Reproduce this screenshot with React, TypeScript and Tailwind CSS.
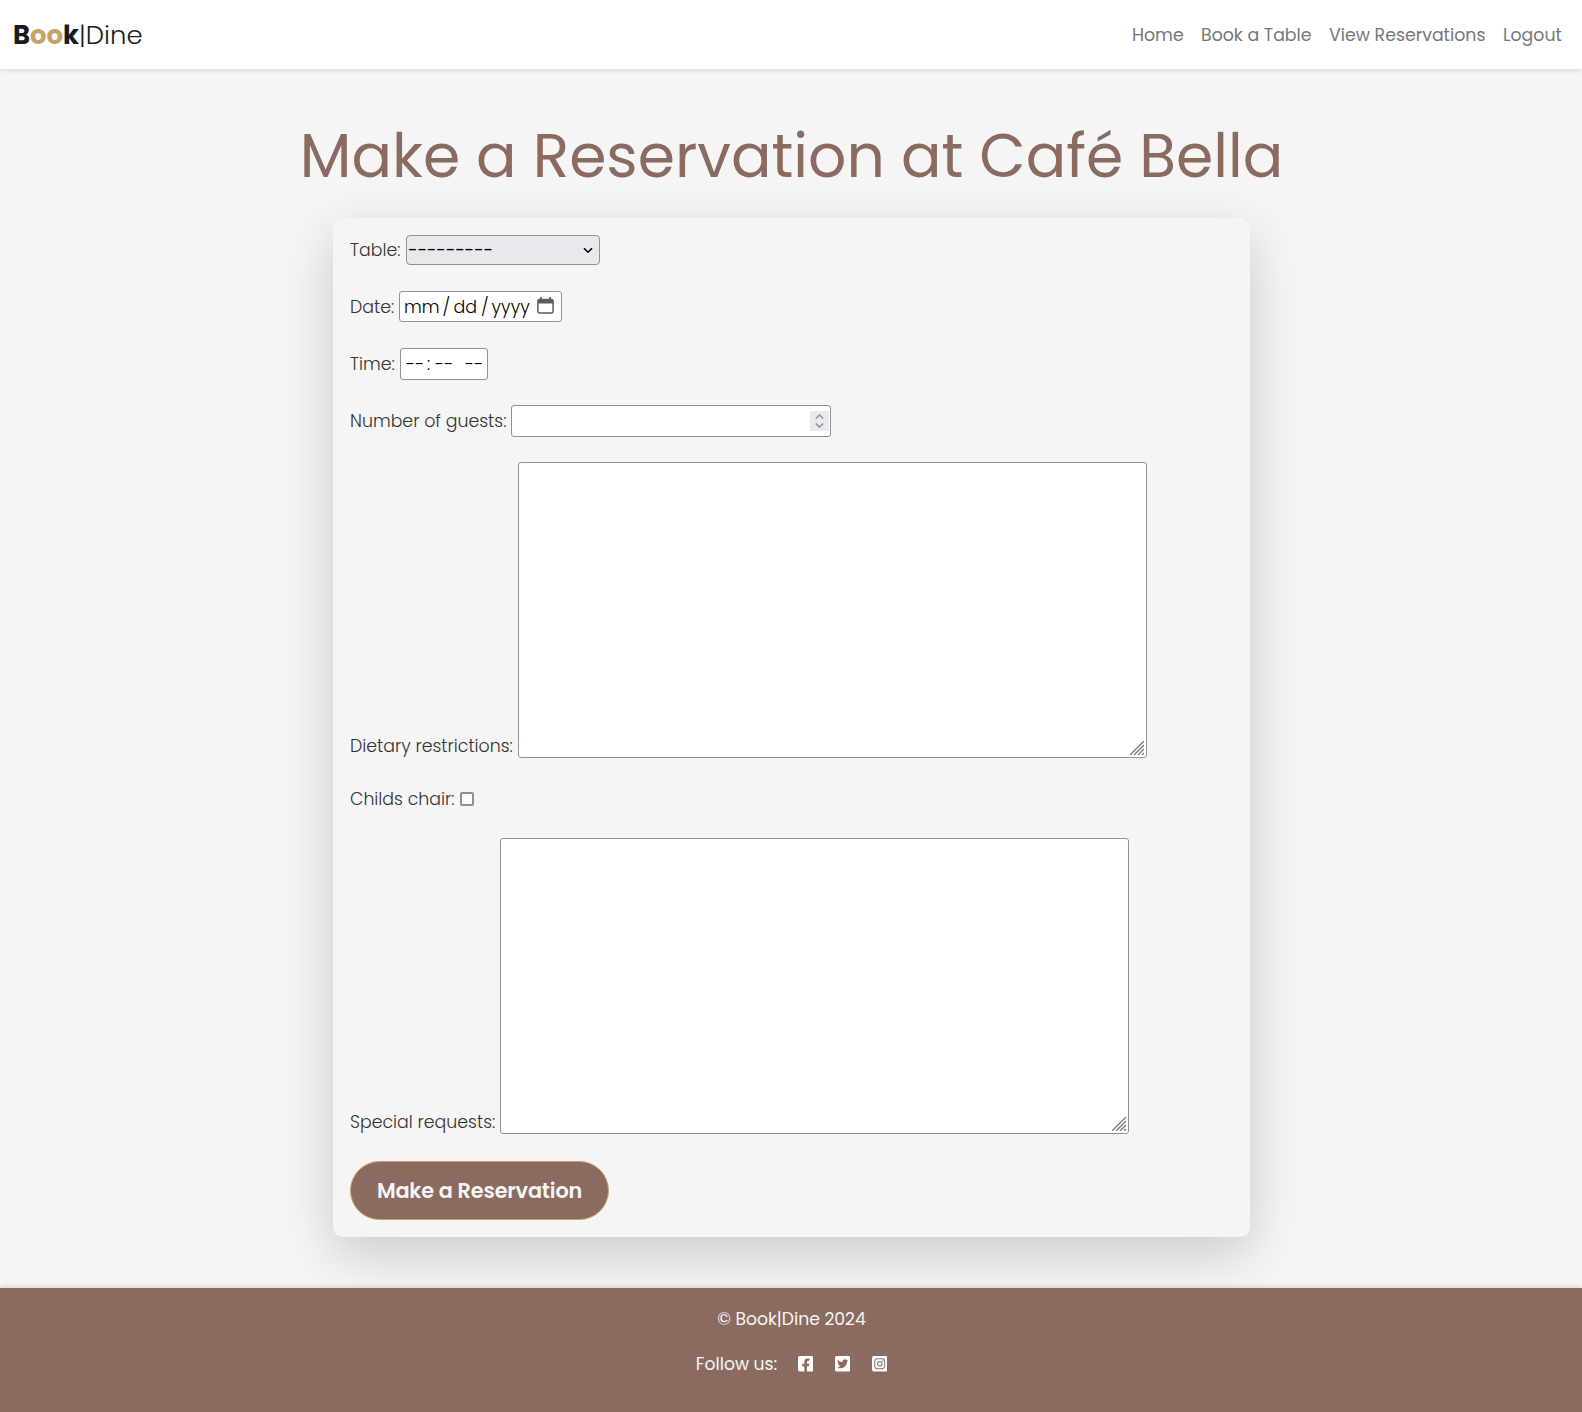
import type { ReactNode } from "react";
import { FaFacebookSquare, FaInstagramSquare, FaTwitterSquare } from "react-icons/fa";

const label = "block h-6 shrink-0 whitespace-nowrap text-[17.38px] leading-6 text-[#333]";
const field = "rounded-[3px] border border-[#8f8f9d] bg-white text-black";

function Row({ children, className = "" }: { children: ReactNode; className?: string }) {
  return <div className={`flex items-center ${className}`}>{children}</div>;
}

function TextArea() {
  return (
    <div className={`${field} flex h-[296px] w-[629px] items-end justify-end p-[2px]`}>
      <svg width="14" height="14" viewBox="0 0 14 14" fill="none" stroke="#777" strokeWidth="1.3">
        <path d="M0 14L14 0M4 14L14 4M8 14L14 8M12 14L14 12" />
      </svg>
    </div>
  );
}

export default function App() {
  return (
    <div className="flex min-h-[1412px] w-full flex-col bg-[#f5f5f5] font-['Poppins','Inter',sans-serif] font-light">
      <nav className="flex h-[69px] items-center justify-between bg-white pr-[19px] pl-[13px] shadow-[0_2px_4px_rgba(0,0,0,0.1)]">
        <div className="flex h-8 items-center text-[25.9px] leading-8 text-[#1a1a1a]">
          <span className="font-bold">
            B<span className="text-[#c9a366]">oo</span>k
          </span>
          <span>|Dine</span>
        </div>
        <div className="flex pt-px text-[17.35px] leading-6 font-normal whitespace-nowrap text-[#777]">
          <a className="w-[69px]">Home</a>
          <a className="w-[128px]">Book a Table</a>
          <a className="w-[174px]">View Reservations</a>
          <a className="w-[60px]">Logout</a>
        </div>
      </nav>

      <h1 className="relative z-20 mt-[51px] h-[72px] pl-px text-center text-[60px] leading-[72px] font-normal whitespace-nowrap text-[#8b6b5f]">
        Make a Reservation at Café Bella
      </h1>

      <form className="relative z-10 mt-[26px] ml-[333px] h-[1019px] w-[917px] rounded-[10px] bg-[#f5f5f5] pt-[17px] pl-[17px] shadow-[0_17px_52px_rgba(0,0,0,0.175)]">
        <Row className="h-[30px]">
          <span className={`${label} w-[56px]`}>Table:</span>
          <div className="flex h-[30px] w-[194px] items-center justify-between rounded-[4px] border border-[#8f8f9d] bg-[#e9e9ed] pr-[6px] pl-px text-[17.4px] text-black">
            <span className="pt-px font-normal tracking-[-0.15px]">---------</span>
            <svg width="10" height="7" viewBox="0 0 10 7" fill="none" stroke="#000" strokeWidth="1.6">
              <path d="M1 1.2L5 5.2L9 1.2" />
            </svg>
          </div>
        </Row>
        <Row className="mt-[26px] h-[31px]">
          <span className={`${label} w-[49px]`}>Date:</span>
          <div className={`${field} flex h-[31px] w-[163px] items-center pl-[4px] text-[17.4px] leading-6`}>
            <span className="w-[38.5px]">mm</span>
            <span className="w-[11px]">/</span>
            <span className="w-[27.5px]">dd</span>
            <span className="w-[10.5px]">/</span>
            <span className="w-[45.5px] tracking-[0.1px]">yyyy</span>
            <svg className="-mt-[2px]" width="17" height="17" viewBox="0 0 17 17">
              <rect x="0.9" y="2.4" width="15.2" height="13.7" rx="2" fill="none" stroke="#5b5b5b" strokeWidth="1.5" />
              <path d="M1 2.4h15v4.2H1zM3 0h1.8v3H3zM12.2 0H14v3h-1.8z" fill="#5b5b5b" />
            </svg>
          </div>
        </Row>
        <Row className="mt-[26px] h-[32px]">
          <span className={`${label} w-[50px]`}>Time:</span>
          <div className={`${field} flex h-[32px] w-[88px] items-center pl-[5px] text-[17.4px] leading-6`}>
            <span className="w-[21px] tracking-[0.3px]">--</span>
            <span className="w-[8px]">:</span>
            <span className="w-[30px] tracking-[0.3px]">--</span>
            <span className="tracking-[0.3px]">--</span>
          </div>
        </Row>
        <Row className="mt-[25px] h-[32px]">
          <span className={`${label} w-[161px]`}>Number of guests:</span>
          <div className={`${field} flex h-[32px] w-[320px] items-center justify-end pr-px`}>
            <div className="flex h-[20px] w-[19px] items-center justify-center bg-[#e9e9ed]">
              <svg width="9" height="14" viewBox="0 0 9 14" fill="none" stroke="#8f8f9d" strokeWidth="1.5">
                <path d="M0.8 4.5L4.5 1L8.2 4.5M0.8 9.5L4.5 13L8.2 9.5" />
              </svg>
            </div>
          </div>
        </Row>
        <div className="mt-[25px] flex items-end">
          <span className={`${label} w-[168px]`}>Dietary restrictions:</span>
          <TextArea />
        </div>
        <Row className="mt-[29px] h-6">
          <span className={`${label} w-[110px]`}>Childs chair:</span>
          <span className="h-[14px] w-[14px] rounded-[2px] border-2 border-[#8f8f9d] bg-white" />
        </Row>
        <div className="mt-[27px] flex items-end">
          <span className={`${label} w-[150px]`}>Special requests:</span>
          <TextArea />
        </div>
        <button
          type="button"
          className="mt-[27px] block h-[59px] w-[259px] rounded-full border border-[#c9a366] bg-[#8b6b5f] text-[20.8px] font-semibold tracking-[-0.15px] whitespace-nowrap text-[#f5f5f5]"
        >
          Make a Reservation
        </button>
      </form>

      <footer className="mt-[51px] flex h-[124px] flex-col items-center bg-[#8b6b5f] pt-[19px] text-[17.2px] leading-6 font-normal text-[#f5f5f5] shadow-[0_-2px_4px_rgba(0,0,0,0.1)]">
        <p className="h-6 pl-px">© Book|Dine 2024</p>
        <div className="mt-[21px] flex h-6 items-center pl-px">
          <span className="w-[102px]">Follow us:</span>
          <div className="flex gap-[21.6px] text-white">
            <FaFacebookSquare className="h-[17.6px] w-[15.4px]" />
            <FaTwitterSquare className="h-[17.6px] w-[15.4px]" />
            <FaInstagramSquare className="h-[17.6px] w-[15.4px]" />
          </div>
        </div>
      </footer>
    </div>
  );
}
